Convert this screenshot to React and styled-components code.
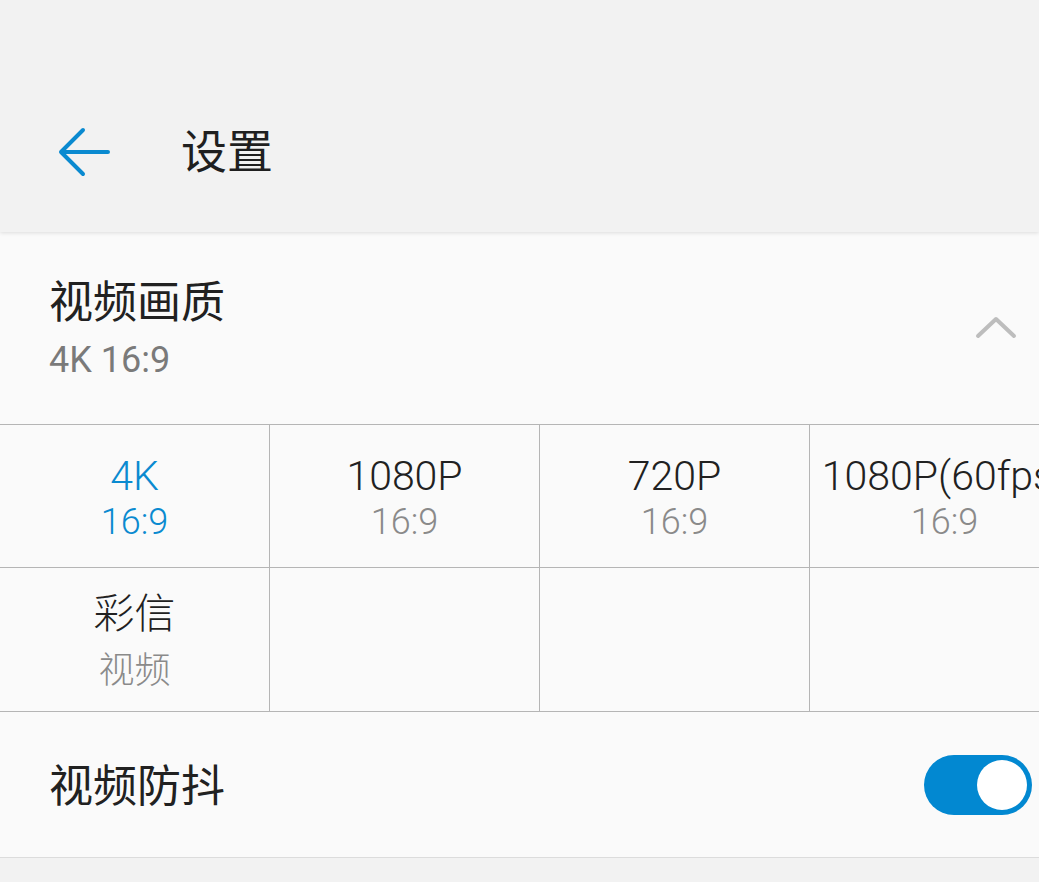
import styled, { createGlobalStyle } from 'styled-components'

const GlobalStyle = createGlobalStyle`
   html, body {
      margin: 0;
      padding: 0;
      background: #f2f2f2;
   }
   body {
      font-family: Roboto, "Noto Sans CJK SC", sans-serif;
      color: #212121;
   }
`

const Page = styled.div`
   width: 1039px;
   height: 882px;
   overflow: hidden;
   background: #f2f2f2;
`
const TopBar = styled.header`
   height: 232px;
   box-sizing: border-box;
   padding: 72px 0 0 56px;
   display: flex;
   align-items: center;
   background: #f2f2f2;
   position: relative;
   z-index: 1;
   box-shadow: 0 1px 4px rgba(0, 0, 0, 0.12);
`
const Toolbar = styled.div`
   height: 160px;
   display: flex;
   align-items: center;
   gap: 69px;
`
const BackBtn = styled.button`
   border: none;
   background: transparent;
   padding: 0;
   width: 56px;
   height: 56px;
   display: flex;
   cursor: pointer;
`
const Title = styled.h1`
   margin: 0;
   font-size: 46px;
   font-weight: 400;
   line-height: 56px;
   color: #1f1f1f;
`
const Content = styled.main`
   background: #fafafa;
   border-bottom: 1px solid #dcdcdc;
`
const SectionHead = styled.div`
   height: 192px;
   box-sizing: border-box;
   padding: 0 21px 0 49px;
   display: flex;
   align-items: center;
   justify-content: space-between;
`
const HeadText = styled.div`
   display: flex;
   flex-direction: column;
   gap: 9px;
   align-self: flex-start;
   margin-top: 45px;
`
const ItemTitle = styled.div`
   font-size: 44px;
   line-height: 52px;
   color: #212121;
   margin-top: ${p => p.$shift || 0}px;
`
const ItemSub = styled.div`
   font-size: 36px;
   line-height: 44px;
   color: #7a7a7a;
`
const Grid = styled.div`
   display: grid;
   grid-template-columns: repeat(4, 270px);
   border-top: 1px solid #b5b5b5;
   overflow: hidden;
`
const Cell = styled.div`
   height: ${p => p.$h}px;
   box-sizing: border-box;
   border-right: 1px solid #b5b5b5;
   border-bottom: 1px solid #b5b5b5;
   display: flex;
   flex-direction: column;
   align-items: center;
   justify-content: center;
   gap: ${p => p.$gap || 0}px;
   white-space: nowrap;
   padding-top: 6px;
   color: ${p => (p.$active ? '#0a8ad0' : '#212121')};
`
const CellMain = styled.div`
   font-size: 41px;
   font-weight: 300;
   line-height: 46px;
`
const CellSub = styled.div`
   font-size: 36px;
   font-weight: 300;
   line-height: 46px;
   color: ${p => (p.$active ? '#0a8ad0' : '#8a8a8a')};
`
const Row = styled.div`
   height: 145px;
   box-sizing: border-box;
   padding: 0 7px 0 49px;
   display: flex;
   align-items: center;
   justify-content: space-between;
`
const Switch = styled.div`
   width: 108px;
   height: 60px;
   border-radius: 30px;
   background: #0288d1;
   display: flex;
   align-items: center;
   justify-content: flex-end;
   padding: 0 5px;
   box-sizing: border-box;
`
const Knob = styled.div`
   width: 50px;
   height: 50px;
   border-radius: 50%;
   background: #fff;
`

const qualities = [
   { main: '4K', sub: '16:9', active: true },
   { main: '1080P', sub: '16:9' },
   { main: '720P', sub: '16:9' },
   { main: '1080P(60fps)', sub: '16:9' },
   { main: '彩信', sub: '视频', gap: 11 },
   {},
   {},
   {},
]

const App = () => {
   return (
      <Page>
         <GlobalStyle />
         <TopBar>
            <Toolbar>
               <BackBtn>
                  <svg width="56" height="56" viewBox="0 0 56 56" fill="none">
                     <path d="M52 28H5M5 28L27 6M5 28L27 50" stroke="#0a8ad0" strokeWidth="4" strokeLinecap="round" strokeLinejoin="round" />
                  </svg>
               </BackBtn>
               <Title>设置</Title>
            </Toolbar>
         </TopBar>
         <Content>
            <SectionHead>
               <HeadText>
                  <ItemTitle>视频画质</ItemTitle>
                  <ItemSub>4K 16:9</ItemSub>
               </HeadText>
               <svg width="44" height="24" viewBox="0 0 44 24" fill="none">
                  <path d="M4 20L22 3L40 20" stroke="#bdbdbd" strokeWidth="4" strokeLinecap="round" strokeLinejoin="round" />
               </svg>
            </SectionHead>
            <Grid>
               { qualities.map((q, i) => (
                  <Cell key={i} $h={i < 4 ? 143 : 144} $active={q.active} $gap={q.gap}>
                     { q.main && <CellMain>{ q.main }</CellMain> }
                     { q.sub && <CellSub $active={q.active}>{ q.sub }</CellSub> }
                  </Cell>
               )) }
            </Grid>
            <Row>
               <ItemTitle $shift={4}>视频防抖</ItemTitle>
               <Switch>
                  <Knob />
               </Switch>
            </Row>
         </Content>
      </Page>
   )
}

export default App
